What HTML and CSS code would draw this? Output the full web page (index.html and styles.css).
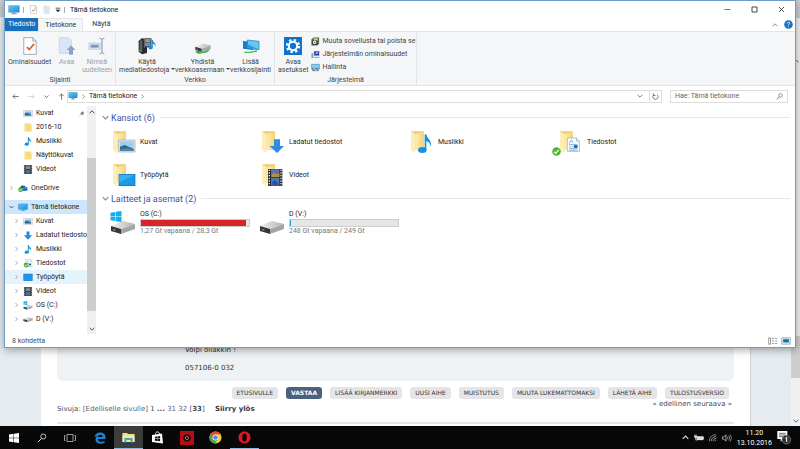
FILE: index.html
```html
<!DOCTYPE html>
<html lang="fi">
<head>
<meta charset="utf-8">
<title>Tämä tietokone</title>
<link rel="stylesheet" href="styles.css">
</head>
<body>
<svg class="sprite" aria-hidden="true">
  <defs>
    <linearGradient id="g-folder" x1="0" x2="1"><stop offset="0" stop-color="#fdeeb6"/><stop offset="1" stop-color="#f5d272"/></linearGradient>
    <linearGradient id="g-screen" x1="0" y1="0" x2="1" y2="1"><stop offset="0" stop-color="#55c8f5"/><stop offset="1" stop-color="#1c8fe0"/></linearGradient>
    <linearGradient id="g-drive" x1="0" x2="1"><stop offset="0" stop-color="#f0f0f0"/><stop offset="1" stop-color="#b4b4b4"/></linearGradient>
  </defs>
  <symbol id="pc" viewBox="0 0 24 20"><path d="M1 1h22v14H1z" fill="#3f7ca8"/><path d="M2 2h20v12H2z" fill="url(#g-screen)"/><path d="M9 15h6v2H9zM6 17h12v1.5H6z" fill="#6d9fc0"/></symbol>
  <symbol id="desk" viewBox="0 0 24 20"><path d="M1 1h22v17H1z" fill="#1674bd"/><path d="M2 2h20v14H2z" fill="#1c97ea"/></symbol>
  <symbol id="pic" viewBox="0 0 24 20"><path d="M1 2h22v16H1z" fill="#a9b7c2"/><path d="M2 3h20v14H2z" fill="#fff"/><path d="M4 5h16v10H4z" fill="#7db7e6"/><path d="M4 10l6-1 10 4v2H4z" fill="#2d6678"/></symbol>
  <symbol id="folder-s" viewBox="0 0 20 20"><path d="M2 1h13l3 3v15H2z" fill="#f7d980"/><path d="M2 1h3v18H2z" fill="#fbe9ad"/></symbol>
  <symbol id="note" viewBox="0 0 20 24"><ellipse cx="6.5" cy="19" rx="5.5" ry="4.3" fill="#1693dc"/><path d="M9.500 19V0h2.500c0 6 9 7 6 16-1-5-3-6-6-6.500V19z" fill="#1693dc"/></symbol>
  <symbol id="film" viewBox="0 0 20 20"><path d="M1 0h18v20H1z" fill="#34383f"/><path d="M5 1h10v8H5z" fill="#5c82b6"/><path d="M5 11h10v8H5z" fill="#496d9e"/><path d="M5 6l5-2 5 3v2H5z" fill="#a5914c"/><path d="M2.500 1v19M17.500 1v19" stroke="#dce2e8" stroke-width="1.500" stroke-dasharray="2 2"/></symbol>
  <symbol id="down" viewBox="0 0 24 24"><path d="M8 1h8v10h7L12 23 1 11h7z" fill="#2b87db"/></symbol>
  <symbol id="doc" viewBox="0 0 22 24"><path d="M1 1h15l5 5v17H1z" fill="#fff" stroke="#8798a6"/><path d="M16 1v5h5" fill="#dde4ea" stroke="#8798a6"/><path d="M4 10l4-6 2 5M4 12h14M4 18h14M4 21h14" stroke="#4d9bcb" stroke-width="1.300" fill="none"/><path d="M12 13h6v4h-6z" fill="#26518d"/><path d="M4 15h7" stroke="#8bb4d0"/></symbol>
  <symbol id="check" viewBox="0 0 20 20"><circle cx="10" cy="10" r="9.500" fill="#4cb82e"/><path d="M5 10.500l3.500 3.500L15 6.500" fill="none" stroke="#fff" stroke-width="2.800"/></symbol>
  <symbol id="docs" viewBox="0 0 24 24"><use href="#doc" x="4" width="20" height="23"/><use href="#check" y="9" width="14" height="14"/></symbol>
  <symbol id="drive" viewBox="0 0 26 14"><path d="M1 6L13 1l12 3-14 5z" fill="url(#g-drive)"/><path d="M1 6l10 3v5L1 11z" fill="#343638"/><path d="M11 9l14-5v5l-14 5z" fill="#a3a5a7"/><path d="M3 9.500l2.500.8" stroke="#5ed44d" stroke-width="1.200"/></symbol>
  <symbol id="win" viewBox="0 0 20 20"><path d="M0 3l9-1.300V9.500H0zM10 1.500L20 0v9.500H10zM0 10.500h9v7.800L0 17zM10 10.500h10V20l-10-1.500z" fill="currentColor"/></symbol>
  <symbol id="osdrive" viewBox="0 0 26 24"><use href="#win" width="12" height="11" color="#14aef0"/><use href="#drive" y="9" width="26" height="14"/></symbol>
  <symbol id="folder" viewBox="0 0 44 66"><path d="M3 1h39v56H14z" fill="#efcb69"/><path d="M3 1l13 8v57L3 58z" fill="#fdeeb8"/><path d="M16 9l26-7v55H16z" fill="url(#g-folder)"/></symbol>
  <symbol id="right" viewBox="0 0 10 10"><path d="M3 1l4 4-4 4" fill="none" stroke="currentColor" stroke-width="1.400"/></symbol>
  <symbol id="chev" viewBox="0 0 10 10"><path d="M1 3l4 4 4-4" fill="none" stroke="currentColor" stroke-width="1.500"/></symbol>
  <symbol id="up" viewBox="0 0 10 10"><path d="M1 7l4-4 4 4" fill="none" stroke="currentColor" stroke-width="1.600"/></symbol>
  <symbol id="arrow" viewBox="0 0 20 20"><path d="M19 10H3M9 3.500L2.500 10 9 16.500" fill="none" stroke="currentColor" stroke-width="2.200"/></symbol>
  <symbol id="prop" viewBox="0 0 40 52"><path d="M2 2h26l10 10v38H2z" fill="#fff" stroke="#92a0ac" stroke-width="2.500"/><path d="M28 2v10h10" fill="none" stroke="#92a0ac" stroke-width="2.500"/><path d="M11 29l7 7 14-16" fill="none" stroke="#d9632b" stroke-width="5"/></symbol>
  <symbol id="lens" viewBox="0 0 20 20"><circle cx="12.500" cy="7" r="5" fill="none" stroke="currentColor" stroke-width="1.700"/><path d="M9 11l-7 7" stroke="currentColor" stroke-width="2"/></symbol>
</svg>

<main class="desktop">
  <section class="browser">
    <div class="forum">
      <div class="post"><p>Voipi ollakkin !</p><p>057106-0 032</p></div>
      <nav class="actions">
        <a href="#">ETUSIVULLE</a><a href="#" class="primary">VASTAA</a><a href="#">LISÄÄ KIRJANMERKKI</a><a href="#">UUSI AIHE</a><a href="#">MUISTUTUS</a><a href="#">MUUTA LUKEMATTOMAKSI</a><a href="#">LÄHETÄ AIHE</a><a href="#">TULOSTUSVERSIO</a>
      </nav>
      <div class="pages">
        <p>Sivuja: <a href="#">[Edelliselle sivulle]</a> 1 <b>...</b> <a href="#">31</a> <a href="#">32</a> [<b>33</b>] <a href="#" class="top">Siirry ylös</a></p>
        <p class="near">« edellinen seuraava »</p>
      </div>
    </div>
    <div class="pagebar"><span class="cap"></span><svg class="i6 edge"><use href="#up"/></svg><span class="thumb"></span><svg class="i6"><use href="#chev"/></svg></div>
  </section>

  <section class="window">
    <header class="title">
      <svg class="i12"><use href="#pc"/></svg><i class="bar"></i>
      <svg class="i9"><use href="#prop"/></svg>
      <svg class="i9 gap" viewBox="0 0 20 24"><path d="M2 1h13l4 4v18H2z" fill="#dce5f2"/></svg>
      <svg class="i6 gap" viewBox="0 0 10 10"><path d="M1 2h8M2 5h6L5 8z" stroke="#333" stroke-width="1.300" fill="#333"/></svg><i class="bar"></i>
      <h1>Tämä tietokone</h1>
      <div class="controls">
        <button aria-label="Pienennä"><svg viewBox="0 0 14 14"><path d="M1 7h12" stroke="#777" stroke-width="2"/></svg></button>
        <button aria-label="Suurenna"><svg viewBox="0 0 14 14"><path d="M2 2h10v10H2z" fill="none" stroke="#333" stroke-width="1.800"/></svg></button>
        <button aria-label="Sulje"><svg viewBox="0 0 14 14"><path d="M2 2l10 10M12 2L2 12" stroke="#333" stroke-width="1.700"/></svg></button>
      </div>
    </header>
    <nav class="tabs">
      <button class="file">Tiedosto</button><button class="active">Tietokone</button><button>Näytä</button>
      <span class="help"><svg class="i6"><use href="#up"/></svg><svg class="i9" viewBox="0 0 20 20"><circle cx="10" cy="10" r="9.500" fill="#1473c4"/><path d="M7 8c0-4 6-4 6-1 0 2-3 2-3 5M10 14v2" fill="none" stroke="#fff" stroke-width="1.800"/></svg></span>
    </nav>
    <div class="ribbon">
      <div class="group g1">
        <div class="tools">
          <button><svg class="big"><use href="#prop"/></svg>Ominaisuudet</button>
          <button class="off"><svg class="big" viewBox="0 0 52 54"><path d="M3 2h27l9 9v38H3z" fill="#d9e5f6" stroke="#bccce2" stroke-width="2"/><path d="M38 25l13 14h-7v14H32V39h-7z" fill="#8ea2c6"/></svg>Avaa</button>
          <button class="off"><svg class="big" viewBox="0 0 54 54"><path d="M3 18h34v19H3z" fill="#dae4f3" stroke="#b6c5dc" stroke-width="2"/><path d="M8 23h24v9H8z" fill="#8396bd"/><path d="M35 4c5 0 7 2 7 5v36c0 3-2 5-7 5M49 4c-5 0-7 2-7 5M49 50c-5 0-7-2-7-5" fill="none" stroke="#8091b1" stroke-width="3"/></svg>Nimeä<br>uudelleen</button>
        </div><h2>Sijainti</h2>
      </div>
      <div class="group g2">
        <div class="tools">
          <button><svg class="big" viewBox="0 0 56 54"><path d="M2 12l9-9 17 3v43l-15 4-11-8z" fill="#282c32"/><path d="M5 14l8-7v40l-8-5z" fill="#58616b"/><path d="M18 3h24v28H18z" fill="#30353b"/><path d="M22 5h16v10H22zM22 18h16v10H22z" fill="#6692ca"/><path d="M24 11l6-3 7 5v3H24z" fill="#b49853"/><path d="M20 4v27M40 4v27" stroke="#e2e6ea" stroke-width="2" stroke-dasharray="3 3"/><use href="#note" x="31" y="8" width="25" height="31"/><path d="M4 40h5v4H4z" fill="#46cc48"/></svg>Käytä<br><span>mediatiedostoja <em></em></span></button>
          <button><svg class="big" viewBox="0 0 54 54"><use href="#drive" x="2" y="18" width="50" height="27"/><path d="M3 44c9-4 17-4 25 0l20-8c-4 9-12 13-22 12-9 4-17 2-23-4z" fill="#3dae50"/></svg>Yhdistä<br><span>verkkoasemaan <em></em></span></button>
          <button><svg class="big" viewBox="0 0 54 54"><path d="M3 12l31 3v24L3 35z" fill="#1580c9"/><path d="M16 9l35 4v25l-35-4z" fill="#65c8f4" stroke="#1674b4" stroke-width="2"/><path d="M17 22l33 15-33-4z" fill="#269ae3"/><path d="M7 46h16l22-4" stroke="#4eb65a" stroke-width="4" fill="none"/></svg>Lisää<br>verkkosijainti</button>
        </div><h2>Verkko</h2>
      </div>
      <div class="group g3">
        <div class="tools">
          <button><svg class="big" viewBox="0 0 54 54"><path d="M0 0h54v54H0z" fill="#0c74d0"/><circle cx="27" cy="27" r="18" fill="none" stroke="#fff" stroke-width="7" stroke-dasharray="7 7.140"/><circle cx="27" cy="27" r="12.500" fill="none" stroke="#fff" stroke-width="6"/></svg>Avaa<br>asetukset</button>
          <div class="links">
            <button><svg class="i9" viewBox="0 0 20 20"><path d="M1 5l5-4h12v14l-4 4H1z" fill="#57615a"/><path d="M6 3h9v5H6z" fill="#f3c84b"/><path d="M2 8h12v9H2z" fill="#353a36"/><circle cx="8" cy="12" r="4" fill="#d9efdc"/><circle cx="8" cy="12" r="1.400" fill="#365"/></svg>Muuta sovellusta tai poista se</button>
            <button><svg class="i9" viewBox="0 0 20 20"><path d="M6 2h13v12H6z" fill="#c3cce4"/><path d="M7 3h11v9H7z" fill="#1d35a8"/><path d="M10 10l3-6 3 5" fill="none" stroke="#fff" stroke-width="1.500"/><path d="M1 7h4v11H1zM7 16h12v2H7z" fill="#8993a9"/></svg>Järjestelmän ominaisuudet</button>
            <button><svg class="i9" viewBox="0 0 20 20"><path d="M1 2h18v12H1z" fill="#347dac"/><path d="M2 3h16v8H2z" fill="#83cdf2"/><path d="M3 11h14v7H3z" fill="#5b7f97"/><path d="M5 15l3-3 3 5 4-4" stroke="#fff" stroke-width="1.500" fill="none"/></svg>Hallinta</button>
          </div>
        </div><h2>Järjestelmä</h2>
      </div>
    </div>
    <div class="address">
      <button aria-label="Takaisin"><svg class="i7"><use href="#arrow"/></svg></button>
      <button aria-label="Eteenpäin" class="fwd"><svg class="i7"><use href="#arrow"/></svg></button>
      <button aria-label="Historia"><svg class="i5"><use href="#chev"/></svg></button>
      <button aria-label="Ylös" class="upward"><svg class="i7"><use href="#arrow"/></svg></button>
      <div class="path"><svg class="i10"><use href="#pc"/></svg><svg class="i5"><use href="#right"/></svg><span>Tämä tietokone</span><svg class="i5"><use href="#right"/></svg>
        <button class="drop" aria-label="Edelliset sijainnit"><svg class="i6"><use href="#chev"/></svg></button>
        <button class="reload" aria-label="Päivitä"><svg class="i7" viewBox="0 0 20 20"><path d="M5 5a7.500 7.500 0 1 0 10 0M4 1v6h6" fill="none" stroke="#555" stroke-width="2.200"/></svg></button>
      </div>
      <label class="search"><input type="text" placeholder="Hae: Tämä tietokone" aria-label="Hae"><svg class="i7"><use href="#lens"/></svg></label>
    </div>
    <div class="body">
      <nav class="tree">
        <ul>
          <li><i></i><svg><use href="#pic"/></svg>Kuvat<svg class="pin" viewBox="0 0 20 20"><path d="M11 2l7 7-3 1-3 4v3L3 8h3l4-3z" fill="#777"/><path d="M7 13l-5 5" stroke="#777" stroke-width="2"/></svg></li>
          <li><i></i><svg><use href="#folder-s"/></svg>2016-10</li>
          <li><i></i><svg><use href="#note"/></svg>Musiikki</li>
          <li><i></i><svg><use href="#folder-s"/></svg>Näyttökuvat</li>
          <li><i></i><svg><use href="#film"/></svg>Videot</li>
        </ul>
        <ul>
          <li class="root"><svg class="tw"><use href="#right"/></svg><svg viewBox="0 0 24 20"><path d="M5 14a5 5 0 0 1 1-8 7 7 0 0 1 12 0 5 5 0 0 1 4 8z" fill="#1254a5"/><path d="M10 16a4 4 0 0 1 3-7 5 5 0 0 1 8 2 3 3 0 0 1 1 5z" fill="#1668c2" stroke="#fff"/><use href="#check" y="7" width="12" height="12"/></svg>OneDrive</li>
        </ul>
        <ul>
          <li class="root selected"><svg class="tw open"><use href="#chev"/></svg><svg><use href="#pc"/></svg>Tämä tietokone</li>
          <li><svg class="tw"><use href="#right"/></svg><svg><use href="#pic"/></svg>Kuvat</li>
          <li><svg class="tw"><use href="#right"/></svg><svg><use href="#down"/></svg>Ladatut tiedosto</li>
          <li><svg class="tw"><use href="#right"/></svg><svg><use href="#note"/></svg>Musiikki</li>
          <li><svg class="tw"><use href="#right"/></svg><svg><use href="#docs"/></svg>Tiedostot</li>
          <li class="hover"><svg class="tw"><use href="#right"/></svg><svg><use href="#desk"/></svg>Työpöytä</li>
          <li><svg class="tw"><use href="#right"/></svg><svg><use href="#film"/></svg>Videot</li>
          <li><svg class="tw"><use href="#right"/></svg><svg><use href="#osdrive"/></svg>OS (C:)</li>
          <li><svg class="tw"><use href="#right"/></svg><svg><use href="#drive"/></svg>D (V:)</li>
        </ul>
      </nav>
      <div class="treebar"><svg class="i6"><use href="#up"/></svg><span></span><svg class="i6"><use href="#chev"/></svg></div>
      <div class="content">
        <h2><svg class="i7"><use href="#chev"/></svg>Kansiot (6)</h2>
        <div class="tiles">
          <div class="tile"><svg viewBox="0 0 78 70"><use href="#folder" x="6" y="2" width="44" height="66"/><path d="M26 29h49v36H26z" fill="#dfe6eb" stroke="#9aa9b5" stroke-width="2"/><path d="M30 33h41v28H30z" fill="#9dcdf0"/><path d="M30 49l14-5 27 12v5H30z" fill="#2e6b73"/><path d="M30 57l22-4 19 5v3H30z" fill="#4c87c6"/></svg>Kuvat</div>
          <div class="tile"><svg viewBox="0 0 78 70"><use href="#folder" x="6" y="2" width="44" height="66"/><path d="M45 27h18v20h12L54 68 32 47h13z" fill="#2f8be0"/></svg>Ladatut tiedostot</div>
          <div class="tile"><svg viewBox="0 0 78 70"><use href="#folder" x="6" y="2" width="44" height="66"/><ellipse cx="43" cy="59" rx="13" ry="9" fill="#1693dc"/><path d="M50 59V12h5c1 14 19 18 13 38-1-12-6-15-13-17v26z" fill="#1693dc"/></svg>Musiikki</div>
          <div class="tile"><svg viewBox="0 0 78 70"><use href="#folder" x="6" y="2" width="44" height="66"/><use href="#doc" x="29" y="18" width="40" height="50"/></svg><svg class="badge"><use href="#check"/></svg>Tiedostot</div>
          <div class="tile"><svg viewBox="0 0 78 70"><use href="#folder" x="6" y="2" width="44" height="66"/><path d="M26 32h50v36H26z" fill="#166aa8"/><path d="M28 34h46v32H28z" fill="#169aec"/><path d="M28 34h46L28 58z" fill="#38aef3"/></svg>Työpöytä</div>
          <div class="tile"><svg viewBox="0 0 78 70"><use href="#folder" x="6" y="2" width="44" height="66"/><path d="M27 17h43v51H27z" fill="#25292f"/><path d="M36 18h25v23H36zM36 43h25v24H36z" fill="#4c77b9"/><path d="M38 35l8-7 8 4 7-2v11H38z" fill="#b39539"/><path d="M40 57l7-7 10 8v8H40z" fill="#334f9b"/><path d="M49 25h7v8h-7z" fill="#c84a42"/><path d="M31 19v49M66 19v49" stroke="#e5e8ea" stroke-width="4" stroke-dasharray="4 4"/></svg>Videot</div>
        </div>
        <h2><svg class="i7"><use href="#chev"/></svg>Laitteet ja asemat (2)</h2>
        <div class="tiles">
          <div class="tile"><svg><use href="#osdrive"/></svg><div class="disk"><span>OS (C:)</span><div class="meter full"><i></i></div><small>1,27 Gt vapaana / 28,3 Gt</small></div></div>
          <div class="tile"><svg viewBox="0 0 26 24"><use href="#drive" y="9" width="26" height="14"/></svg><div class="disk"><span>D (V:)</span><div class="meter"><i></i></div><small>248 Gt vapaana / 249 Gt</small></div></div>
        </div>
      </div>
    </div>
    <footer class="status"><span>8 kohdetta</span>
      <svg class="i10" viewBox="0 0 28 22"><path d="M2 2h5v18H2zM11 4h6M11 11h6M11 18h6M20 4h6M20 11h6M20 18h6" fill="none" stroke="#777" stroke-width="2"/></svg>
      <svg class="i10" viewBox="0 0 28 22"><path d="M2 2h24v18H2z" fill="#d4eaf7" stroke="#83a0b5" stroke-width="2"/><path d="M6 6h16v9H6z" fill="#276b9a"/></svg>
    </footer>
  </section>
</main>

<footer class="taskbar">
  <button aria-label="Käynnistä"><svg color="#fff"><use href="#win"/></svg></button>
  <button aria-label="Haku"><svg color="#ddd"><use href="#lens"/></svg></button>
  <button aria-label="Tehtävänäkymä"><svg class="i12" viewBox="0 0 24 20"><path d="M6 3h12v14H6zM3 5H1v10h2M21 5h2v10h-2" fill="none" stroke="#ccc" stroke-width="1.500"/></svg></button>
  <button class="app" aria-label="Edge"><svg class="i12" viewBox="0 0 24 24"><path d="M1 11C2 4 7 1 12.500 1 20 1 23 6 23 11v3H8c0 6 8 7 13 4v4C12 26 3 22 3 15c0-4 2-6 5-8-3 1-5 2-7 4zM8 10h9c0-6-8-6-9 0z" fill="#1683dc"/></svg></button>
  <button class="app current" aria-label="Resurssienhallinta"><svg class="i13" viewBox="0 0 26 24"><path d="M1 3h9l2 2h13v16H1z" fill="#f9dc7c"/><path d="M1 8h24v13H1z" fill="#fbe79c"/><path d="M5 13h16v9h-4v-5H9v5H5z" fill="#36a5cf"/></svg></button>
  <button class="app" aria-label="Kauppa"><svg class="i13" viewBox="0 0 24 26"><path d="M1 8l20-3 2 20L1 22z" fill="#fff"/><path d="M8 7c0-7 7-7 8-1" fill="none" stroke="#fff" stroke-width="1.800"/><use href="#win" x="6" y="10" width="12" height="11" color="#111"/></svg></button>
  <button class="app" aria-label="Mediasoitin"><svg class="i14" viewBox="0 0 28 28"><path d="M0 0h28v28H0z" fill="#b80d16"/><circle cx="14" cy="14" r="6.500" fill="#27080b" stroke="#101010" stroke-width="2"/><path d="M14 10l4 4-4 4-4-4z" fill="none" stroke="#d8b1b1" stroke-width="1.300"/></svg></button>
  <button class="app" aria-label="Chrome"><svg class="i13" viewBox="0 0 26 26"><circle cx="13" cy="13" r="12" fill="#f6cb35"/><path d="M2.600 7a12 12 0 0 1 20.800 0H13l-5 9z" fill="#de4b3c"/><path d="M2.600 7A12 12 0 0 0 12 25l6-9H8z" fill="#44a65a"/><circle cx="13" cy="13" r="5.800" fill="#fff"/><circle cx="13" cy="13" r="4.500" fill="#4688e8"/></svg></button>
  <button class="app running" aria-label="Opera"><svg class="i13" viewBox="0 0 26 26"><path fill-rule="evenodd" d="M13 1C6 1 1 6 1 13s5 12 12 12 12-5 12-12S20 1 13 1zm0 4c3 0 4.500 3 4.500 8s-1.500 8-4.500 8-4.500-3-4.500-8S10 5 13 5z" fill="#df1722"/></svg></button>
  <div class="tray">
    <svg class="i7" color="#ddd"><use href="#up"/></svg>
    <svg class="i10" viewBox="0 0 28 22"><path d="M8 6h18v11H8z" fill="#ddd"/><path d="M26 9h2v5h-2zM1 5h7v5c-4 4-7 0-7-5M2 1v4M6 1v4M5 11v6h3" fill="#ddd" stroke="#ddd" stroke-width="1.500"/></svg>
    <svg class="i8" viewBox="0 0 22 22"><path d="M1 20C1 9 9 2 20 2M6 20C6 12 12 7 20 7M11 20c0-5 4-8 9-8M16 20c0-2 2-3 4-3" fill="none" stroke="#bbb" stroke-width="2"/></svg>
    <svg class="i10" viewBox="0 0 28 22"><path d="M1 8h4l6-6v18l-6-6H1z" fill="none" stroke="#ddd" stroke-width="2"/><path d="M15 7q3 4 0 8M19 4q5 7 0 14M23 1q7 10 0 20" fill="none" stroke="#bbb" stroke-width="1.800"/></svg>
    <time>11.20<br>13.10.2016</time>
    <svg class="i15" viewBox="0 0 45 45"><path d="M1 3h30v24H19l-8 8v-8H1z" fill="#fff"/><path d="M6 10h20M6 15h20M6 20h14" stroke="#222" stroke-width="2"/><circle cx="28" cy="29" r="13" fill="#333" stroke="#888" stroke-width="2"/><path d="M25 25l4-3v14" fill="none" stroke="#fff" stroke-width="3"/></svg>
  </div>
</footer>
</body>
</html>
```
FILE: styles.css
```css
* { box-sizing: border-box; }

body {
  margin: 0;
  height: 100vh;
  display: flex;
  flex-direction: column;
  overflow: hidden;
  font: 7px/10px Roboto, "Noto Sans", sans-serif;
  color: #222;
}

h1, h2, p, ul { margin: 0; padding: 0; font: inherit; list-style: none; }
button { margin: 0; padding: 0; border: 0; background: none; font: inherit; color: inherit; }
a { color: inherit; text-decoration: none; }
svg { display: block; flex: none; }
.sprite { position: absolute; width: 0; height: 0; }

.i5 { width: 5px; height: 5px; }
.i6 { width: 6px; height: 6px; }
.i7 { width: 7px; height: 7px; }
.i8 { width: 8px; height: 8px; }
.i9 { width: 9px; height: 9px; }
.i10 { width: 10px; height: 8px; }
.i12 { width: 12px; height: 12px; }
.i13 { width: 13px; height: 13px; }
.i14 { width: 14px; height: 14px; }
.i15 { width: 15px; height: 15px; }

.desktop { position: relative; flex: 1; min-height: 0; }

/* Forum page in the browser behind the window */
.browser { height: 100%; display: flex; background: linear-gradient(#c9cbcd 17px, #e6ebf0 17px); padding-left: 41px; }
.forum {
  flex: 1;
  display: flex;
  flex-direction: column;
  justify-content: flex-end;
  margin-right: 40px;
  padding: 0 16px 2px;
  background: #fff;
  border-right: 1px solid #cdd2d8;
  font-family: "DejaVu Sans", sans-serif;
  color: #444a58;
}
.post {
  flex: 1;
  display: flex;
  flex-direction: column;
  justify-content: flex-end;
  gap: 8px;
  padding: 0 128px 8px;
  background: #eef2f5;
  border-radius: 0 0 6px 6px;
  color: #333;
}
.actions { display: flex; justify-content: flex-end; gap: 8px; padding: 6px 5px 0; font-size: 6px; line-height: 12px; color: #333; }
.actions a { padding: 0 5px; border-radius: 3px; background: #e5e5e7; white-space: nowrap; }
.actions .primary { background: #4c6180; color: #fff; font-weight: bold; }
.pages { display: flex; justify-content: space-between; padding-bottom: 6px; border-bottom: 2px solid #e6e7e9; line-height: 14px; }
.pages p { padding-top: 3px; }
.pages a { color: #5d6272; }
.pages .top { margin-left: 8px; font-weight: bold; color: #33394a; }
.pages .near { padding: 0 2px 2px 0; line-height: 10px; }
.pagebar { width: 9px; display: flex; flex-direction: column; align-items: center; background: #f0f0f0; color: #555; padding-bottom: 2px; }
.pagebar .cap { width: 9px; height: 18px; background: #c9cbcd; }
.pagebar .edge { margin-top: 40px; }
.pagebar .thumb { width: 9px; height: 42px; margin: auto 0 40px; background: #cdcdcd; }

/* Explorer window */
.window {
  position: absolute;
  inset: 0 4px 78px;
  display: flex;
  flex-direction: column;
  background: #fff;
  border: 1px solid #6f9cc4;
  box-shadow: 0 2px 8px rgba(0, 0, 0, .35);
}
.title { display: flex; align-items: center; height: 17px; padding-left: 3px; }
.title .bar { width: 1px; height: 6px; margin: 0 5px 0 3px; background: #aaa; }
.title .gap { margin-left: 4px; }
.title h1 { color: #111; }
.controls { display: flex; margin-left: auto; }
.controls button { width: 27px; height: 16px; display: grid; place-items: center; }
.controls svg { width: 7px; height: 7px; }

.tabs { display: flex; height: 13px; line-height: 13px; padding-right: 2px; }
.tabs button { padding: 0 9px; color: #333; }
.tabs .file { padding: 0 3px; background: #1b6fc0; color: #fff; }
.tabs .active { padding: 0 6px; background: #f4f6f8; border: 1px solid #e2e4e6; border-bottom: 0; line-height: 12px; }
.help { display: flex; align-items: center; gap: 6px; margin-left: auto; color: #888; }

.ribbon { display: flex; height: 55px; background: #f4f6f8; border: solid #e1e3e5; border-width: 1px 0; }
.group { display: flex; flex-direction: column; border-right: 1px solid #e3e5e8; text-align: center; color: #444; }
.g1 { width: 111px; }
.g2 { width: 159px; }
.g3 { width: 142px; }
.group h2 { margin-top: auto; line-height: 10px; }
.tools { display: flex; justify-content: space-between; padding: 4px 3px 0; }
.tools > button { display: flex; flex-direction: column; align-items: center; line-height: 8px; white-space: nowrap; }
.big { width: 18px; height: 18px; margin: 1px 0 3px; }
.off { color: #9aa0a8; }
.tools em { display: inline-block; border: solid transparent; border-width: 2px 2px 0; border-top-color: #444; vertical-align: 2px; }
.links { display: flex; flex-direction: column; gap: 3px; }
.links button { display: flex; align-items: center; gap: 2px; line-height: 10px; white-space: nowrap; }
.g3 .tools { justify-content: flex-start; gap: 3px; }

.address { display: flex; align-items: center; gap: 8px; height: 20px; padding: 0 7px; color: #555; }
.address > button + button { margin-left: 1px; }
.address > .upward { transform: rotate(90deg); }
.fwd { transform: scaleX(-1); color: #ccc; }
.path { flex: 1; display: flex; align-items: center; gap: 3px; height: 13px; margin-left: -6px; border: 1px solid #ddd; color: #222; }
.path svg { color: #666; }
.path .drop { margin: 0 3px 0 auto; }
.reload { align-self: stretch; width: 12px; display: grid; place-items: center; border-left: 1px solid #ddd; }
.search { width: 118px; height: 13px; display: flex; align-items: center; padding: 0 4px; border: 1px solid #ddd; }
.search input { flex: 1; min-width: 0; padding: 0; border: 0; outline: 0; background: none; font: inherit; }
.search input::placeholder { color: #666; opacity: 1; }

.body { flex: 1; display: flex; min-height: 0; }
.tree { width: 82px; overflow: hidden; }
.tree ul + ul { margin-top: 5px; }
.tree li { display: flex; align-items: center; height: 14px; padding-left: 9px; white-space: nowrap; }
.tree li svg { width: 10px; height: 9px; margin-right: 3px; }
.tree li > i, .tree li .tw { width: 5px; height: 6px; margin-right: 4px; color: #888; }
.tree .root { padding-left: 4px; }
.tree .selected { background: #cce6ff; }
.tree .hover { background: #e5f3fd; }
.tree li .open { color: #333; }
.tree li .pin { width: 6px; height: 7px; margin: 0 2px 0 auto; }
.treebar { width: 9px; display: flex; flex-direction: column; align-items: center; padding: 3px 0 2px; background: #f0f0f0; color: #444; }
.treebar span { flex: 1; width: 9px; margin: 43px 0 15px; background: #cdcdcd; }

.content { flex: 1; padding: 4px 5px 0; }
.content h2 { display: flex; align-items: center; gap: 2px; height: 15px; padding-left: 1px; font-size: 9px; color: #40539c; }
.content h2::after { content: ""; flex: 1; height: 1px; margin-left: 3px; background: #e8e8e8; }
.content h2 svg { color: #888; }
.tiles { display: grid; grid-template-columns: repeat(auto-fill, 149px); grid-auto-rows: 33px; }
.tile { position: relative; display: flex; align-items: center; gap: 4px; padding-left: 9px; }
.tile svg { width: 26px; height: 24px; }
.tile .badge { position: absolute; left: 4px; bottom: 2px; width: 9px; height: 9px; }
.disk { width: 110px; line-height: 9px; }
.disk span { display: block; }
.disk small { display: block; font-size: 7px; color: #777; }
.meter { height: 8px; background: #e6e6e6; border: 1px solid #ccc; }
.meter i { display: block; width: 1%; height: 100%; background: #26a0da; }
.meter.full i { width: 97%; background: #d42529; }

.status { display: flex; align-items: center; gap: 3px; height: 13px; padding: 0 4px 0 7px; color: #3f4d60; }
.status span { margin-right: auto; }

/* Taskbar */
.taskbar { display: flex; height: 23px; background: #080808; color: #fff; }
.taskbar button { width: 28px; display: grid; place-items: center; }
.taskbar button > svg:not([class]) { width: 10px; height: 10px; }
.taskbar .app { width: 29px; }
.taskbar button:nth-child(4) { margin-left: 1px; }
.current { background: #3a3c3e; }
.current, .running { border-bottom: 1px solid #8db8e4; }
.tray { display: flex; align-items: center; gap: 5px; margin-left: auto; padding-right: 8px; }
.tray time { text-align: center; }
```
